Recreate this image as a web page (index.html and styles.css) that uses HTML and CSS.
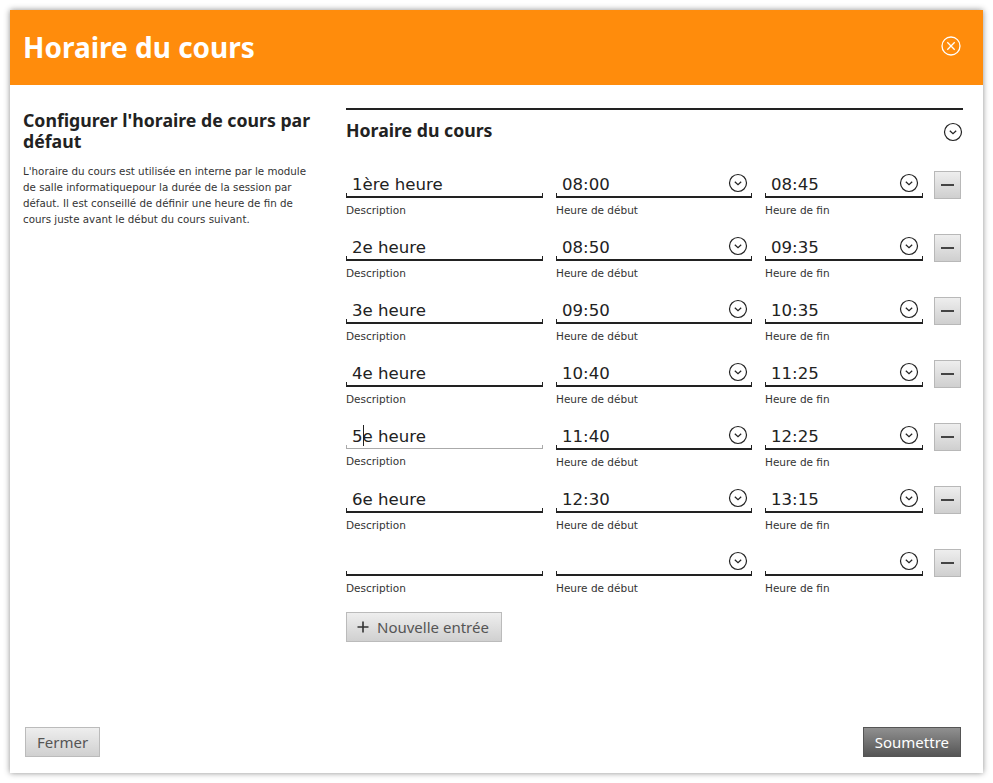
FILE: index.html
```html
<!DOCTYPE html>
<html lang="fr">
<head>
<meta charset="utf-8">
<title>Horaire du cours</title>
<link rel="stylesheet" href="styles.css">
</head>
<body>
<div class="dialog">
  <header class="dlg-head">
    <h1>Horaire du cours</h1>
    <svg class="close" width="20" height="20" viewBox="0 0 20 20"><circle cx="10" cy="10" r="9" fill="none" stroke="#fff" stroke-width="1.3"/><path d="M6.3 6.3L13.7 13.7M13.7 6.3L6.3 13.7" stroke="#fff" stroke-width="1.3"/></svg>
  </header>
  <div class="dlg-body">
    <aside class="side">
      <h2>Configurer l'horaire de cours par défaut</h2>
      <p>L'horaire du cours est utilisée en interne par le module de salle informatiquepour la durée de la session par défaut. Il est conseillé de définir une heure de fin de cours juste avant le début du cours suivant.</p>
    </aside>
    <section class="main">
      <div class="sec-head">
        <h3>Horaire du cours</h3>
        <svg class="chev" width="20" height="20" viewBox="0 0 20 20"><circle cx="10" cy="10" r="8.5" fill="none" stroke="#222" stroke-width="1.2"/><path d="M6.8 8.8L10 11.8L13.2 8.8" fill="none" stroke="#222" stroke-width="1.2"/></svg>
      </div>
      <div class="rows">
        <div class="row">
          <div class="field f-desc"><div class="box"><span class="val">1ère heure</span></div><label>Description</label></div>
          <div class="field f-start"><div class="box"><span class="val">08:00</span><svg class="chev" width="20" height="20" viewBox="0 0 20 20"><circle cx="10" cy="10" r="8.5" fill="none" stroke="#222" stroke-width="1.2"/><path d="M6.8 8.8L10 11.8L13.2 8.8" fill="none" stroke="#222" stroke-width="1.2"/></svg></div><label>Heure de début</label></div>
          <div class="field f-end"><div class="box"><span class="val">08:45</span><svg class="chev" width="20" height="20" viewBox="0 0 20 20"><circle cx="10" cy="10" r="8.5" fill="none" stroke="#222" stroke-width="1.2"/><path d="M6.8 8.8L10 11.8L13.2 8.8" fill="none" stroke="#222" stroke-width="1.2"/></svg></div><label>Heure de fin</label></div>
          <button class="minus"><span></span></button>
        </div>
        <div class="row">
          <div class="field f-desc"><div class="box"><span class="val">2e heure</span></div><label>Description</label></div>
          <div class="field f-start"><div class="box"><span class="val">08:50</span><svg class="chev" width="20" height="20" viewBox="0 0 20 20"><circle cx="10" cy="10" r="8.5" fill="none" stroke="#222" stroke-width="1.2"/><path d="M6.8 8.8L10 11.8L13.2 8.8" fill="none" stroke="#222" stroke-width="1.2"/></svg></div><label>Heure de début</label></div>
          <div class="field f-end"><div class="box"><span class="val">09:35</span><svg class="chev" width="20" height="20" viewBox="0 0 20 20"><circle cx="10" cy="10" r="8.5" fill="none" stroke="#222" stroke-width="1.2"/><path d="M6.8 8.8L10 11.8L13.2 8.8" fill="none" stroke="#222" stroke-width="1.2"/></svg></div><label>Heure de fin</label></div>
          <button class="minus"><span></span></button>
        </div>
        <div class="row">
          <div class="field f-desc"><div class="box"><span class="val">3e heure</span></div><label>Description</label></div>
          <div class="field f-start"><div class="box"><span class="val">09:50</span><svg class="chev" width="20" height="20" viewBox="0 0 20 20"><circle cx="10" cy="10" r="8.5" fill="none" stroke="#222" stroke-width="1.2"/><path d="M6.8 8.8L10 11.8L13.2 8.8" fill="none" stroke="#222" stroke-width="1.2"/></svg></div><label>Heure de début</label></div>
          <div class="field f-end"><div class="box"><span class="val">10:35</span><svg class="chev" width="20" height="20" viewBox="0 0 20 20"><circle cx="10" cy="10" r="8.5" fill="none" stroke="#222" stroke-width="1.2"/><path d="M6.8 8.8L10 11.8L13.2 8.8" fill="none" stroke="#222" stroke-width="1.2"/></svg></div><label>Heure de fin</label></div>
          <button class="minus"><span></span></button>
        </div>
        <div class="row">
          <div class="field f-desc"><div class="box"><span class="val">4e heure</span></div><label>Description</label></div>
          <div class="field f-start"><div class="box"><span class="val">10:40</span><svg class="chev" width="20" height="20" viewBox="0 0 20 20"><circle cx="10" cy="10" r="8.5" fill="none" stroke="#222" stroke-width="1.2"/><path d="M6.8 8.8L10 11.8L13.2 8.8" fill="none" stroke="#222" stroke-width="1.2"/></svg></div><label>Heure de début</label></div>
          <div class="field f-end"><div class="box"><span class="val">11:25</span><svg class="chev" width="20" height="20" viewBox="0 0 20 20"><circle cx="10" cy="10" r="8.5" fill="none" stroke="#222" stroke-width="1.2"/><path d="M6.8 8.8L10 11.8L13.2 8.8" fill="none" stroke="#222" stroke-width="1.2"/></svg></div><label>Heure de fin</label></div>
          <button class="minus"><span></span></button>
        </div>
        <div class="row">
          <div class="field f-desc focus"><div class="box"><span class="val">5<span class="caret"></span>e heure</span></div><label>Description</label></div>
          <div class="field f-start"><div class="box"><span class="val">11:40</span><svg class="chev" width="20" height="20" viewBox="0 0 20 20"><circle cx="10" cy="10" r="8.5" fill="none" stroke="#222" stroke-width="1.2"/><path d="M6.8 8.8L10 11.8L13.2 8.8" fill="none" stroke="#222" stroke-width="1.2"/></svg></div><label>Heure de début</label></div>
          <div class="field f-end"><div class="box"><span class="val">12:25</span><svg class="chev" width="20" height="20" viewBox="0 0 20 20"><circle cx="10" cy="10" r="8.5" fill="none" stroke="#222" stroke-width="1.2"/><path d="M6.8 8.8L10 11.8L13.2 8.8" fill="none" stroke="#222" stroke-width="1.2"/></svg></div><label>Heure de fin</label></div>
          <button class="minus"><span></span></button>
        </div>
        <div class="row">
          <div class="field f-desc"><div class="box"><span class="val">6e heure</span></div><label>Description</label></div>
          <div class="field f-start"><div class="box"><span class="val">12:30</span><svg class="chev" width="20" height="20" viewBox="0 0 20 20"><circle cx="10" cy="10" r="8.5" fill="none" stroke="#222" stroke-width="1.2"/><path d="M6.8 8.8L10 11.8L13.2 8.8" fill="none" stroke="#222" stroke-width="1.2"/></svg></div><label>Heure de début</label></div>
          <div class="field f-end"><div class="box"><span class="val">13:15</span><svg class="chev" width="20" height="20" viewBox="0 0 20 20"><circle cx="10" cy="10" r="8.5" fill="none" stroke="#222" stroke-width="1.2"/><path d="M6.8 8.8L10 11.8L13.2 8.8" fill="none" stroke="#222" stroke-width="1.2"/></svg></div><label>Heure de fin</label></div>
          <button class="minus"><span></span></button>
        </div>
        <div class="row">
          <div class="field f-desc"><div class="box"><span class="val"></span></div><label>Description</label></div>
          <div class="field f-start"><div class="box"><span class="val"></span><svg class="chev" width="20" height="20" viewBox="0 0 20 20"><circle cx="10" cy="10" r="8.5" fill="none" stroke="#222" stroke-width="1.2"/><path d="M6.8 8.8L10 11.8L13.2 8.8" fill="none" stroke="#222" stroke-width="1.2"/></svg></div><label>Heure de début</label></div>
          <div class="field f-end"><div class="box"><span class="val"></span><svg class="chev" width="20" height="20" viewBox="0 0 20 20"><circle cx="10" cy="10" r="8.5" fill="none" stroke="#222" stroke-width="1.2"/><path d="M6.8 8.8L10 11.8L13.2 8.8" fill="none" stroke="#222" stroke-width="1.2"/></svg></div><label>Heure de fin</label></div>
          <button class="minus"><span></span></button>
        </div>
      </div>
      <button class="btn add"><svg width="12" height="12" viewBox="0 0 12 12"><path d="M6 0.5V11.5M0.5 6H11.5" stroke="#333" stroke-width="1.6"/></svg>Nouvelle entrée</button>
    </section>
  </div>
  <footer class="dlg-foot">
    <button class="btn">Fermer</button>
    <button class="btn primary">Soumettre</button>
  </footer>
</div>
</body>
</html>
```

FILE: styles.css
```css
* { box-sizing: border-box; }
html, body { margin: 0; padding: 0; background: #fff; }
body {
  padding: 10px;
  font-family: "Noto Sans", "DejaVu Sans", sans-serif;
  color: #222;
}
.dialog {
  width: 973px;
  height: 763px;
  background: #fff;
  box-shadow: 0 0 6px rgba(0,0,0,0.45);
  display: flex;
  flex-direction: column;
}
.dlg-head {
  height: 75px;
  background: #ff8c0c;
  display: flex;
  align-items: center;
  justify-content: space-between;
  padding: 0 22px 0 13px;
}
.dlg-head h1 {
  margin: 0 0 2px;
  color: #fff;
  font-size: 28px;
  font-weight: 700;
  letter-spacing: 0;
}
.close { display: block; margin-top: -4px; }
.dlg-body {
  flex: 1;
  display: flex;
  padding: 23px 20px 0 13px;
}
.side { width: 298px; }
.side h2 {
  margin: 2px 0 0;
  font-size: 17.7px;
  line-height: 21px;
  font-weight: 700;
  color: #222;
}
.side p {
  margin: 11px 0 0;
  font-family: "DejaVu Sans", sans-serif;
  font-size: 10.3px;
  line-height: 16px;
  color: #333;
}
.main {
  flex: 1;
  margin-left: 25px;
  border-top: 2px solid #222;
}
.sec-head {
  display: flex;
  justify-content: space-between;
  align-items: center;
  height: 40px;
}
.sec-head h3 {
  margin: 0;
  font-size: 17.7px;
  font-weight: 700;
  color: #222;
}
.sec-head .chev { margin-top: 3px; }
.rows { margin-top: 22px; }
.row {
  display: flex;
  align-items: flex-start;
  height: 63px;
}
.field { display: flex; flex-direction: column; }
.f-desc { width: 197px; margin-right: 13px; }
.f-start { width: 196px; margin-right: 13px; }
.f-end { width: 158px; margin-right: 11px; }
.box {
  height: 26px;
  border-bottom: 2px solid #222;
  display: flex;
  align-items: flex-end;
  justify-content: space-between;
  position: relative;
  padding: 0 4px 0 6px;
}
.box::before, .box::after {
  content: "";
  position: absolute;
  bottom: -2px;
  width: 1px;
  height: 5px;
  background: #222;
}
.box::before { left: 0; }
.box::after { right: 0; }
.focus .box { border-bottom: 1px solid #aaa; height: 25px; }
.focus .box::before, .focus .box::after { height: 4px; bottom: -1px; background: #aaa; }
.val {
  font-family: "DejaVu Sans", sans-serif;
  font-size: 16.6px;
  line-height: 22px;
  color: #222;
}
.caret {
  display: inline-block;
  width: 1px;
  height: 21px;
  background: #222;
  vertical-align: -4px;
  margin-right: -1px;
}
.box .chev { margin-bottom: 3px; }
.field label {
  font-family: "DejaVu Sans", sans-serif;
  font-size: 10.5px;
  color: #333;
  margin-top: 5px;
  line-height: 14px;
}
.minus {
  width: 27px;
  height: 28px;
  margin-top: -1px;
  border: 1px solid #b8b8b8;
  background: linear-gradient(#eeeeee, #cfcfcf);
  display: flex;
  align-items: center;
  justify-content: center;
  padding: 0;
}
.minus span { display: block; width: 13px; height: 2px; background: #444; }
.btn {
  font-family: "Noto Sans", "DejaVu Sans", sans-serif;
  font-size: 15px;
  color: #555;
  height: 30px;
  padding: 0 11px;
  border: 1px solid #bbb;
  background: linear-gradient(#eeeeee, #d0d0d0);
  display: inline-flex;
  align-items: center;
}
.add {
  margin-top: -1px;
  padding: 0 10px;
  width: 156px;
}
.add svg { margin-right: 8px; }
.dlg-foot {
  display: flex;
  justify-content: space-between;
  padding: 0 22px 16px 15px;
}
.primary {
  color: #fff;
  border-color: #555;
  background: linear-gradient(#909090, #555);
}
```
